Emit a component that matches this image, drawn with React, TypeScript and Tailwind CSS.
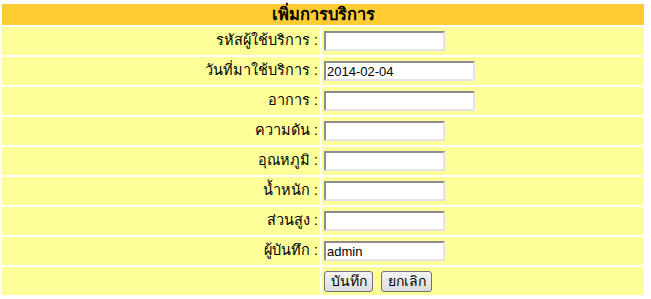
import React, { useState } from 'react';

const rows = [
  { label: 'รหัสผู้ใช้บริการ', value: '', wide: false },
  { label: 'วันที่มาใช้บริการ', value: '2014-02-04', wide: true },
  { label: 'อาการ', value: '', wide: true },
  { label: 'ความดัน', value: '', wide: false },
  { label: 'อุณหภูมิ', value: '', wide: false },
  { label: 'น้ำหนัก', value: '', wide: false },
  { label: 'ส่วนสูง', value: '', wide: false },
  { label: 'ผู้บันทึก', value: 'admin', wide: false },
];

export default function App() {
  const [values, setValues] = useState<string[]>(rows.map(r => r.value));

  return (
    <div className="bg-white min-h-[299px] pt-[2px]" style={{ fontFamily: '"Liberation Sans", Tahoma, "Noto Sans", sans-serif' }}>
      <table className="w-[646px] border-separate border-spacing-[2px] text-[14.5px] text-black">
        <tbody>
          <tr>
            <td colSpan={2} className="h-[21px] bg-[#ffcc33] text-center font-bold text-[16.5px] leading-[21px] p-0">
              เพิ่มการบริการ
            </td>
          </tr>
          {rows.map((r, i) => (
            <tr key={r.label}>
              <td className="w-[318px] h-[28px] bg-[#ffff99] text-right pr-[2px] p-0">{r.label} :</td>
              <td className="h-[28px] bg-[#ffff99] p-0 pl-[2px]">
                <input
                  type="text"
                  value={values[i]}
                  onChange={e => {
                    const next = [...values];
                    next[i] = e.target.value;
                    setValues(next);
                  }}
                  className={`${r.wide ? 'w-[151px]' : 'w-[121px]'} h-[20px] block bg-white border-2 border-t-[#8c8c8c] border-l-[#8c8c8c] border-b-[#e3e3e3] border-r-[#e3e3e3] px-[1px] text-[13px] leading-none outline-none`}
                />
              </td>
            </tr>
          ))}
          <tr>
            <td className="h-[28px] bg-[#ffff99] p-0"></td>
            <td className="h-[28px] bg-[#ffff99] p-0 pl-[2px]">
              <div className="flex gap-[8px]">
                <button className="h-[21px] w-[49px] rounded-[3px] border border-[#707070] bg-gradient-to-b from-[#f4f4f4] to-[#dcdcdc] text-[14px] leading-none">บันทึก</button>
                <button className="h-[21px] w-[51px] rounded-[3px] border border-[#707070] bg-gradient-to-b from-[#f4f4f4] to-[#dcdcdc] text-[14px] leading-none">ยกเลิก</button>
              </div>
            </td>
          </tr>
        </tbody>
      </table>
    </div>
  );
}
